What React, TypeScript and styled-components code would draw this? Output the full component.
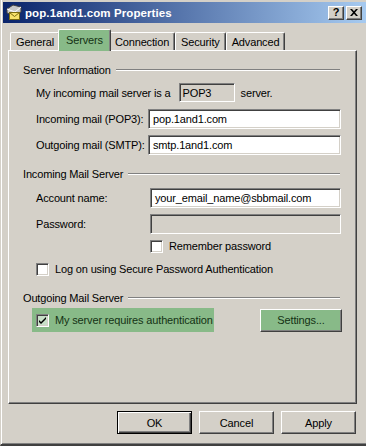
import React from 'react';
import styled, { createGlobalStyle, css } from 'styled-components';

const GlobalStyle = createGlobalStyle`
  html, body {
    margin: 0;
    padding: 0;
    background: #d4d0c8;
  }
  * {
    box-sizing: border-box;
  }
`;

const FONT = `'Liberation Sans', Arial, sans-serif`;
const GREEN = '#88ba88';

const sunken = css`
  border: 1px solid;
  border-color: #808080 #ffffff #ffffff #808080;
  box-shadow: inset 1px 1px 0 #404040, inset -1px -1px 0 #d4d0c8;
`;

const raised = css`
  border: 1px solid;
  border-color: #ffffff #404040 #404040 #ffffff;
  box-shadow: inset -1px -1px 0 #808080;
`;

const tabs = ['General', 'Servers', 'Connection', 'Security', 'Advanced'];

function MailIcon() {
  return (
    <svg width="18" height="17" viewBox="0 0 18 17">
      <path d="M2 5 L8 1 L16 3 L16 8 L10 12 L2 9 Z" fill="#c8c8c8" stroke="#404040" strokeWidth="1" />
      <path d="M2 5 L10 8 L16 3" fill="none" stroke="#ffffff" strokeWidth="1" />
      <path d="M10 8 L10 12" stroke="#606060" strokeWidth="1" />
      <rect x="4.5" y="8.5" width="10" height="7" fill="#f7e26b" stroke="#7a6a10" />
      <path d="M4.5 8.5 L9.5 12.5 L14.5 8.5" fill="none" stroke="#7a6a10" />
    </svg>
  );
}

function Checkbox({ checked }: { checked?: boolean }) {
  return (
    <Box>
      {checked && (
        <svg width="9" height="9" viewBox="0 0 9 9">
          <path d="M1 4 L3 6 L8 1 L8 3 L3 8 L1 6 Z" fill="#000000" />
        </svg>
      )}
    </Box>
  );
}

function Heading({ children, top }: { children: React.ReactNode; top: number }) {
  return (
    <HeadingRow top={top}>
      <span>{children}</span>
      <Etch />
    </HeadingRow>
  );
}

export default function App() {
  return (
    <>
      <GlobalStyle />
      <Window>
        <TitleBar>
          <MailIcon />
          <Title>pop.1and1.com Properties</Title>
          <TitleButtons>
            <CaptionButton>?</CaptionButton>
            <CaptionButton>
              <svg width="8" height="7" viewBox="0 0 8 7">
                <path d="M0 0 L2 0 L4 2.2 L6 0 L8 0 L5 3.5 L8 7 L6 7 L4 4.8 L2 7 L0 7 L3 3.5 Z" fill="#000" />
              </svg>
            </CaptionButton>
          </TitleButtons>
        </TitleBar>

        <Body>
          <TabStrip>
            {tabs.map(t => (
              <Tab key={t} active={t === 'Servers'}>
                {t}
              </Tab>
            ))}
          </TabStrip>

          <Panel>
            <Heading top={0}>Server Information</Heading>
            <Row top={6} height={19}>
              <Label>My incoming mail server is a</Label>
              <TypeBox>POP3</TypeBox>
              <Label>server.</Label>
            </Row>
            <FieldRow top={7} labelWidth={112}>
              <Label>Incoming mail (POP3):</Label>
              <Input>pop.1and1.com</Input>
            </FieldRow>
            <FieldRow top={6} labelWidth={112}>
              <Label>Outgoing mail (SMTP):</Label>
              <Input>smtp.1and1.com</Input>
            </FieldRow>

            <Heading top={12}>Incoming Mail Server</Heading>
            <FieldRow top={7} labelWidth={114}>
              <Label>Account name:</Label>
              <Input>your_email_name@sbbmail.com</Input>
            </FieldRow>
            <FieldRow top={6} labelWidth={114}>
              <Label>Password:</Label>
              <Input disabled />
            </FieldRow>
            <Row top={5} height={14} indent={114}>
              <Checkbox />
              <Label>Remember password</Label>
            </Row>
            <Row top={9} height={14}>
              <Checkbox />
              <Label>Log on using Secure Password Authentication</Label>
            </Row>

            <Heading top={15}>Outgoing Mail Server</Heading>
            <AuthRow>
              <Highlight>
                <Checkbox checked />
                <Label>My server requires authentication</Label>
              </Highlight>
              <Button green width={82}>
                Settings...
              </Button>
            </AuthRow>
          </Panel>

          <Footer>
            <Button isDefault width={75}>
              OK
            </Button>
            <Button width={75}>Cancel</Button>
            <Button width={75}>Apply</Button>
          </Footer>
        </Body>
      </Window>
    </>
  );
}

const Window = styled.div`
  width: 366px;
  height: 446px;
  background: #d4d0c8;
  border-left: 1px solid #d4d0c8;
  border-bottom: 2px solid #404040;
  box-shadow: inset 1px 0 0 #ffffff, inset 0 -1px 0 #808080;
  font-family: ${FONT};
  font-size: 11px;
  letter-spacing: -0.15px;
  color: #000000;
  display: flex;
  flex-direction: column;
`;

const TitleBar = styled.div`
  height: 21px;
  margin: 2px 0 0 2px;
  padding: 0 4px 0 2px;
  background: linear-gradient(to right, #0a246a, #a6caf0);
  display: flex;
  align-items: center;
  gap: 2px;
`;

const Title = styled.div`
  flex: 1;
  color: #ffffff;
  font-weight: bold;
  font-size: 11.5px;
  letter-spacing: 0.1px;
`;

const TitleButtons = styled.div`
  display: flex;
  gap: 2px;
`;

const CaptionButton = styled.div`
  width: 16px;
  height: 14px;
  background: #d4d0c8;
  ${raised};
  display: flex;
  align-items: center;
  justify-content: center;
  font-weight: bold;
  font-size: 11px;
  line-height: 1;
`;

const Body = styled.div`
  flex: 1;
  padding: 6px 9px 0 7px;
  display: flex;
  flex-direction: column;
`;

const TabStrip = styled.div`
  display: flex;
  align-items: flex-end;
  height: 21px;
  padding-left: 2px;
  position: relative;
  z-index: 1;
`;

const Tab = styled.div<{ active?: boolean }>`
  height: ${({ active }) => (active ? '22px' : '18px')};
  margin: ${({ active }) => (active ? '0 -2px -1px -2px' : '0')};
  padding: ${({ active }) => (active ? '0 7px 2px' : '0 5px')};
  background: ${({ active }) => (active ? GREEN : '#d4d0c8')};
  color: ${({ active }) => (active ? '#143214' : '#000')};
  border-top: 1px solid #ffffff;
  border-left: 1px solid #ffffff;
  border-right: 1px solid #404040;
  box-shadow: inset -1px 0 0 #808080;
  border-radius: 2px 2px 0 0;
  display: flex;
  align-items: center;
  font-size: 11px;
  position: relative;
  z-index: ${({ active }) => (active ? 2 : 1)};
`;

const Panel = styled.div`
  height: 354px;
  border: 1px solid;
  border-color: #ffffff #404040 #404040 #ffffff;
  box-shadow: inset -1px -1px 0 #808080;
  padding: 12px 15px 0 14px;
  display: flex;
  flex-direction: column;
`;

const HeadingRow = styled.div<{ top: number }>`
  margin-top: ${({ top }) => top}px;
  height: 14px;
  margin-right: 1px;
  display: flex;
  align-items: center;
  gap: 5px;
  font-size: 11px;
`;

const Etch = styled.div`
  flex: 1;
  height: 2px;
  border-top: 1px solid #808080;
  border-bottom: 1px solid #ffffff;
`;

const Row = styled.div<{ top: number; height: number; indent?: number }>`
  margin-top: ${({ top }) => top}px;
  height: ${({ height }) => height}px;
  padding-left: ${({ indent = 0 }) => 13 + indent}px;
  display: flex;
  align-items: center;
  gap: 6px;
`;

const FieldRow = styled.div<{ top: number; labelWidth: number }>`
  margin-top: ${({ top }) => top}px;
  height: 20px;
  padding-left: 13px;
  display: grid;
  grid-template-columns: ${({ labelWidth }) => labelWidth}px 1fr;
  align-items: center;
`;

const Label = styled.span`
  font-size: 11px;
  white-space: nowrap;
`;

const TypeBox = styled.div`
  width: 56px;
  height: 19px;
  margin: 0 0 0 2px;
  ${sunken};
  padding: 1px 3px;
  font-size: 11px;
  display: flex;
  align-items: center;
`;

const Input = styled.div<{ disabled?: boolean }>`
  height: 20px;
  ${sunken};
  background: ${({ disabled }) => (disabled ? '#d4d0c8' : '#ffffff')};
  padding: 0 4px;
  font-size: 11px;
  display: flex;
  align-items: center;
`;

const Box = styled.div`
  width: 13px;
  height: 13px;
  flex: none;
  background: #ffffff;
  ${sunken};
  display: flex;
  align-items: center;
  justify-content: center;
`;

const AuthRow = styled.div`
  margin-top: 3px;
  height: 24px;
  padding-left: 9px;
  margin-right: -1px;
  display: flex;
  align-items: center;
  justify-content: space-between;
`;

const Highlight = styled.div`
  width: 182px;
  height: 24px;
  background: ${GREEN};
  color: #143214;
  padding-left: 4px;
  display: flex;
  align-items: center;
  gap: 6px;
  ${Box} {
    background: #c8e0c8;
  }
`;

const Button = styled.div<{ width: number; green?: boolean; isDefault?: boolean }>`
  width: ${({ width }) => width}px;
  height: 23px;
  background: ${({ green }) => (green ? GREEN : '#d4d0c8')};
  color: ${({ green }) => (green ? '#143214' : '#000')};
  ${raised};
  ${({ isDefault }) =>
    isDefault &&
    css`
      border: 1px solid #000;
      box-shadow: inset 1px 1px 0 #ffffff, inset -1px -1px 0 #404040, inset -2px -2px 0 #808080;
    `}
  display: flex;
  align-items: center;
  justify-content: center;
  font-size: 11px;
`;

const Footer = styled.div`
  display: flex;
  justify-content: flex-end;
  gap: 7px;
  margin-top: 7px;
  padding-right: 1px;
`;
